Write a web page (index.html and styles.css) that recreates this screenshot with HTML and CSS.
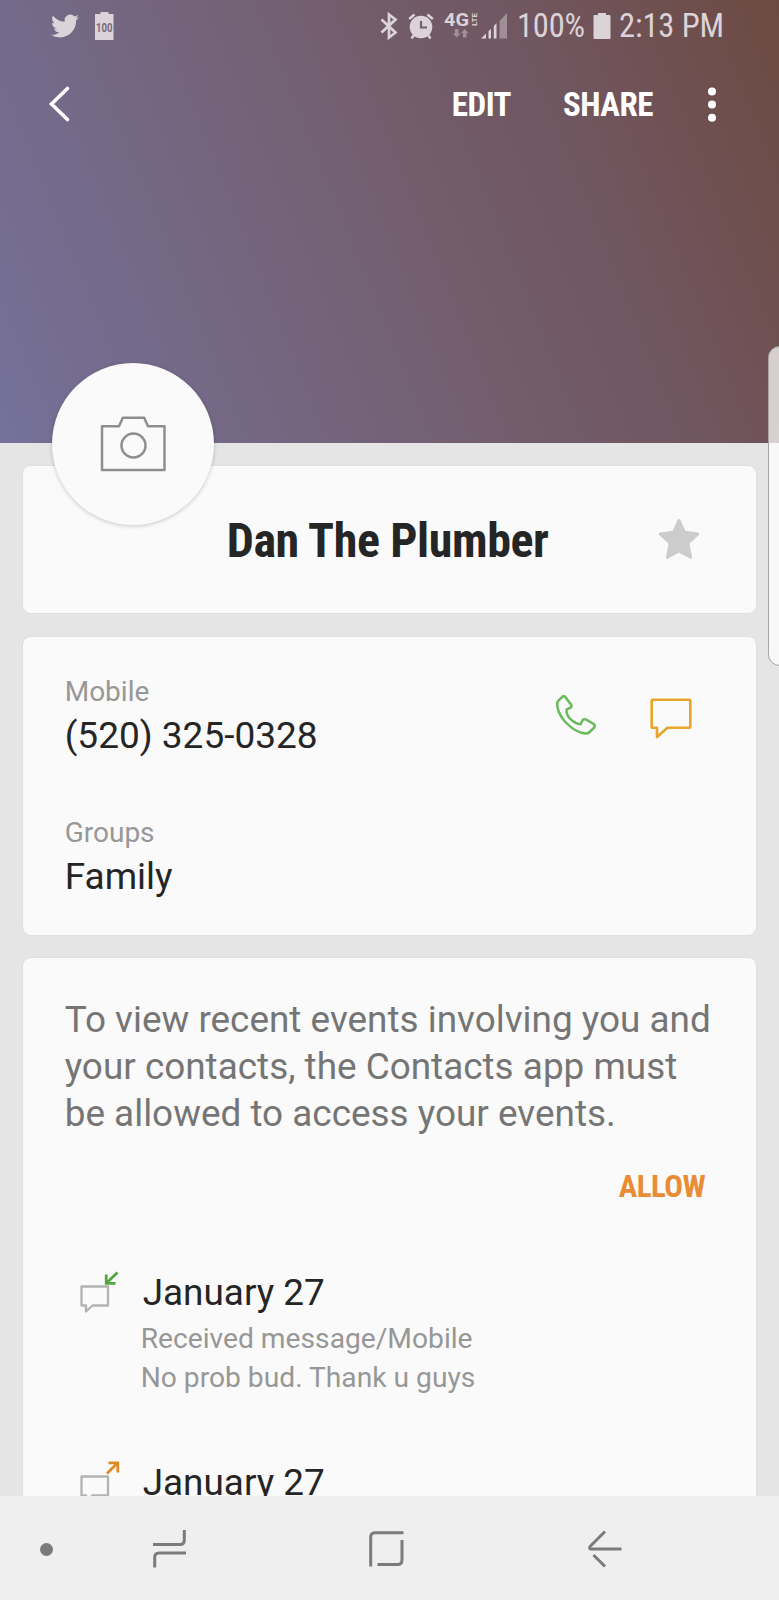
FILE: index.html
```html
<!DOCTYPE html>
<html lang="en">
<head>
    <meta charset="UTF-8">
    <meta name="viewport" content="width=device-width, initial-scale=1.0">
    <title>Dan The Plumber</title>
    <link rel="stylesheet" href="styles.css">
</head>
<body>
    <div class="screen">
        <header class="hero">
            <!-- Status bar -->
            <div class="status-bar">
                <svg class="icon-twitter" width="28" height="28" viewBox="0 0 24 24"><path fill="currentColor" d="M23.953 4.57a10 10 0 01-2.825.775 4.958 4.958 0 002.163-2.723c-.951.555-2.005.959-3.127 1.184a4.92 4.92 0 00-8.384 4.482C7.69 8.095 4.067 6.13 1.64 3.162a4.822 4.822 0 00-.666 2.475c0 1.71.87 3.213 2.188 4.096a4.904 4.904 0 01-2.228-.616v.06a4.923 4.923 0 003.946 4.827 4.996 4.996 0 01-2.212.085 4.936 4.936 0 004.604 3.417 9.867 9.867 0 01-6.102 2.105c-.39 0-.779-.023-1.17-.067a13.995 13.995 0 007.557 2.209c9.053 0 13.998-7.496 13.998-13.985 0-.21 0-.42-.015-.63A9.935 9.935 0 0024 4.59z"/></svg>
                <svg class="icon-full" width="19" height="28" viewBox="0 0 19 28">
                    <path fill="currentColor" d="M5.500 0h8v2h5v26H0V2h5.500z"/>
                    <text x="9.300" y="19.800" text-anchor="middle" textLength="16.500" lengthAdjust="spacingAndGlyphs">100</text>
                </svg>

                <div class="status-right">
                    <svg class="icon-bt" width="18" height="28" viewBox="0 0 18 28" fill="none" stroke="currentColor" stroke-width="2.700"><path d="M1.500 7.500L15.500 20.500L9 25.500V2.500l6.500 5L1.500 20.500"/></svg>
                    <svg class="icon-alarm" width="26" height="27" viewBox="0 0 26 27">
                        <circle cx="13" cy="14" r="11.300" fill="currentColor"/>
                        <path d="M1.200 6L6.500 1.500M24.800 6L19.500 1.500M6 22l-2.500 3.500M20 22l2.500 3.500" stroke="currentColor" stroke-width="2.400"/>
                        <path d="M13 8v6.500h6" fill="none" stroke="#755f68" stroke-width="2.200"/>
                    </svg>
                    <svg class="icon-lte" width="34" height="28" viewBox="0 0 34 28">
                        <text class="g4" x="0" y="13.500" textLength="25" lengthAdjust="spacingAndGlyphs">4G</text>
                        <text class="lte" transform="translate(32.500 14) rotate(-90)" textLength="13" lengthAdjust="spacingAndGlyphs">LTE</text>
                        <path opacity=".45" fill="currentColor" d="M11 17h3.500v4.500h2L12.700 25.500L9 21.500h2zM19 25.500h3.500V21h2L20.700 17L17 21h2z"/>
                    </svg>
                    <svg class="icon-signal" width="27" height="26" viewBox="0 0 27 26" fill="currentColor">
                        <path d="M0 25.500L5 20.500V25.500zM7.500 18.200l2.500-2.500v9.800H7.500zM12.800 13l2.700-2.700v15.200h-2.700z"/>
                        <path opacity=".45" d="M18.500 8L26 0v25.500h-7.500z"/>
                    </svg>
                    <span class="percent condensed">100%</span>
                    <svg class="icon-batt" width="18" height="26" viewBox="0 0 18 26"><path fill="currentColor" d="M5 0h8v2h3.500q1 0 1 1v22q0 1-1 1H1.500q-1 0-1-1V3q0-1 1-1H5z"/></svg>
                    <span class="time condensed">2:13 PM</span>
                </div>
            </div>

            <!-- Toolbar -->
            <div class="toolbar">
                <svg class="back" width="22" height="36" viewBox="0 0 22 36"><path d="M18.500 2.500L2.500 18L18.500 33.500" fill="none" stroke="#fff" stroke-width="3.600" stroke-linecap="round"/></svg>
                <a class="edit condensed">EDIT</a>
                <a class="share condensed">SHARE</a>
                <svg class="more" width="8" height="36" viewBox="0 0 8 36" fill="#fff"><circle cx="4" cy="4.500" r="4"/><circle cx="4" cy="17.500" r="4"/><circle cx="4" cy="30.700" r="4"/></svg>
            </div>

            <div class="avatar">
                <svg width="66" height="56" viewBox="0 0 66 56" fill="none" stroke="#8e8e8e" stroke-width="2.500" stroke-linejoin="round"><path d="M2 10.300H19L22.800 1.700H44.200L48 10.300H64.500V54H2z"/><circle cx="33.500" cy="29.500" r="12"/></svg>
            </div>
        </header>

        <main class="cards">
            <section class="card name-card">
                <h1 class="condensed">Dan The Plumber</h1>
                <svg class="star" width="42" height="42" viewBox="0 0 42 42"><path fill="#ccc" stroke="#ccc" stroke-width="3" stroke-linejoin="round" d="M21 2.500L26.500 14.300L39.800 16L29.800 25.200L32.600 39.300L21 33L9.400 39.300L12.200 25.200L2.200 16L15.500 14.300z"/></svg>
            </section>

            <section class="card info-card">
                <div class="field">
                    <div>
                        <p class="label">Mobile</p>
                        <p class="value">(520) 325-0328</p>
                    </div>
                    <div class="actions">
                        <svg width="40" height="40" viewBox="500 223 120 120" fill="none" stroke="#6ab95c" stroke-width="7.500" stroke-linejoin="round"><path d="M528 229L546 253Q548 259 542 262L532 266Q529 283 545 297Q558 309 574 311L580 298Q584 294 591 297L613 310Q618 314 615 320L601 334Q596 339 588 338.500Q560 337 528 304Q503 275 503.500 250Q503 244 508 239L519 228.500Q524 224 528 229z"/></svg>
                        <svg class="message" width="42" height="41" viewBox="0 0 42 41" fill="none" stroke="#e9a42c" stroke-width="2.600" stroke-linejoin="round"><path d="M2.500 1.700H39.500Q40.300 1.700 40.300 2.500V29Q40.300 29.800 39.500 29.800H17.500L7 39V29.800H2.500Q1.700 29.800 1.700 29V2.500Q1.700 1.700 2.500 1.700z"/></svg>
                    </div>
                </div>
                <div class="field">
                    <div>
                        <p class="label">Groups</p>
                        <p class="value">Family</p>
                    </div>
                </div>
            </section>

            <section class="card history-card">
                <p class="notice">To view recent events involving you and your contacts, the Contacts app must be allowed to access your events.</p>
                <a class="allow condensed">ALLOW</a>

                <div class="event">
                    <svg width="40" height="43" viewBox="0 0 40 43" fill="none">
                        <path d="M1.500 15.500H28V34.500H12.500L6 40.500V34.500H1.500z" stroke="#b3b3b3" stroke-width="2.300" stroke-linejoin="round"/>
                        <path d="M37.500 1.500L26.500 12M26.200 3.500V12.300H35.500" stroke="#51a63c" stroke-width="2.700"/>
                    </svg>
                    <div>
                        <h2>January 27</h2>
                        <p>Received message/Mobile</p>
                        <p>No prob bud. Thank u guys</p>
                    </div>
                </div>
                <div class="event">
                    <svg width="40" height="43" viewBox="0 0 40 43" fill="none">
                        <path d="M1.500 15.500H28V34.500H12.500L6 40.500V34.500H1.500z" stroke="#b3b3b3" stroke-width="2.300" stroke-linejoin="round"/>
                        <path d="M27 12.500L37.500 2M28.500 1.800H37.800V11.500" stroke="#e08a24" stroke-width="2.700"/>
                    </svg>
                    <div>
                        <h2>January 27</h2>
                    </div>
                </div>
            </section>
        </main>

        <div class="edge-panel"></div>
    </div>

    <!-- Navigation bar -->
    <nav class="nav-bar">
        <span class="dot"></span>
        <svg class="recents" width="34" height="38" viewBox="0 0 34 38"><path d="M0 14.500H27Q31.300 14.500 31.300 10V0M33 23H6Q1.700 23 1.700 27.500V37.500"/></svg>
        <svg class="home" width="36" height="36" viewBox="0 0 36 36"><path d="M1.700 35.500V6Q1.700 1.700 6 1.700H34.500M33 9V29Q33 33.500 28.500 33.500H8.500"/></svg>
        <svg class="nav-back" width="34" height="38" viewBox="0 0 34 38"><path d="M17 1.500L2 16.500Q1 19 3 19H33.500M5.500 25L17 36.500"/></svg>
    </nav>
</body>
</html>
```
FILE: styles.css
```css
* {
    box-sizing: border-box;
}

body {
    margin: 0;
    font-family: Roboto, sans-serif;
    background: #efefef;
    color: #252525;
}

h1, h2, p {
    margin: 0;
    font-weight: 400;
}

svg {
    display: block;
    flex-shrink: 0;
    overflow: visible;
}

.condensed {
    font-family: "Roboto Condensed", Roboto, sans-serif;
    font-stretch: 75%;
    white-space: nowrap;
}

.screen {
    position: relative;
    height: 1496px;
    overflow: hidden;
    background: #e5e5e5;
}

.hero {
    position: relative;
    height: 443px;
    background: linear-gradient(68deg, #75719a 0%, #746782 28%, #735f70 50%, #70555d 76%, #6d4a41 100%);
}

/* Status bar */
.status-bar {
    display: flex;
    align-items: center;
    height: 52px;
    padding: 0 54px 0 51px;
    color: #dcd3d8;
}

.icon-full {
    margin-left: 16px;
}

.icon-full text {
    font-size: 12.5px;
    font-weight: 700;
    fill: #75697f;
}

.status-right {
    display: flex;
    align-items: center;
    margin-left: auto;
    font-size: 32.5px;
    line-height: 54px;
}

.icon-alarm {
    margin-left: 10px;
}

.icon-lte {
    margin-left: 10px;
    fill: currentColor;
}

.g4 {
    font-size: 18px;
    font-weight: 700;
}

.lte {
    font-size: 8px;
    font-weight: 700;
}

.icon-signal {
    margin-left: 3px;
}

.percent {
    width: 68px;
    margin-left: 9px;
    letter-spacing: -0.2px;
}

.icon-batt {
    margin-left: 8px;
}

.time {
    width: 106px;
    margin-left: 8px;
    letter-spacing: -0.1px;
}

/* Toolbar */
.toolbar {
    display: flex;
    align-items: center;
    height: 106px;
    padding: 0 63px 0 49px;
    color: #fff;
    font-size: 33px;
    font-weight: 700;
    letter-spacing: -0.5px;
    line-height: 54px;
}

.back {
    margin-top: -2px;
}

.edit {
    margin-left: auto;
}

.share {
    margin-left: 52px;
}

.more {
    margin-left: 55px;
}

.avatar {
    position: absolute;
    left: 52px;
    top: 363px;
    z-index: 1;
    display: flex;
    align-items: center;
    justify-content: center;
    width: 162px;
    height: 162px;
    border-radius: 50%;
    background: #fafafa;
    box-shadow: 0 1px 4px rgba(0, 0, 0, 0.2);
}

/* Cards */
.cards {
    display: flex;
    flex-direction: column;
    gap: 23.5px;
    padding: 23px 22.7px 0;
}

.card {
    flex-shrink: 0;
    background: #fafafa;
    border-radius: 8px;
    box-shadow: 0 0 0 1px #dfdfdf;
}

.name-card {
    display: flex;
    align-items: center;
    height: 147px;
    padding: 0 56px 0 204px;
}

.name-card h1 {
    flex: 1;
    padding-top: 3px;
    font-size: 48px;
    font-weight: 700;
    letter-spacing: -0.4px;
    line-height: 60px;
}

.star {
    margin-top: -2px;
}

.info-card {
    height: 298px;
    padding: 36px 64px 0 42px;
}

.field {
    display: flex;
    justify-content: space-between;
    margin-bottom: 53px;
}

.label {
    color: #979797;
    font-size: 28px;
    line-height: 38px;
}

.value {
    font-size: 37px;
    line-height: 50px;
}

.actions {
    display: flex;
    gap: 54px;
    padding-top: 22px;
}

.message {
    margin-top: 3px;
}

.history-card {
    height: 700px;
    padding: 38px 42px 0;
}

.notice {
    color: #757575;
    font-size: 36.9px;
    line-height: 47px;
}

.allow {
    display: block;
    margin: 30px 9px 64px 0;
    color: #e88d35;
    font-size: 31px;
    font-weight: 700;
    letter-spacing: -0.5px;
    line-height: 40px;
    text-align: right;
}

.event {
    display: flex;
    gap: 21px;
    margin-bottom: 64px;
    padding-left: 15px;
}

.event h2 {
    margin-bottom: 5px;
    padding-left: 2px;
    font-size: 36.9px;
    line-height: 44px;
}

.event p {
    color: #979797;
    font-size: 28.2px;
    line-height: 38.5px;
}

.edge-panel {
    position: absolute;
    top: 346px;
    right: -12px;
    width: 23px;
    height: 320px;
    border: 1px solid #a5a5a5;
    border-radius: 12px;
    background: rgba(255, 255, 255, 0.72);
}

/* Navigation bar */
.nav-bar {
    display: flex;
    align-items: center;
    height: 104px;
    padding-top: 2px;
    padding-left: 40px;
    background: #efefef;
}

.nav-bar path {
    fill: none;
    stroke: #7b7b7b;
    stroke-width: 3;
}

.dot {
    width: 13px;
    height: 13px;
    border-radius: 50%;
    background: #7b7b7b;
}

.recents {
    margin-left: 99.5px;
}

.home {
    margin-left: 182.5px;
}

.nav-back {
    margin-left: 183px;
}
```
